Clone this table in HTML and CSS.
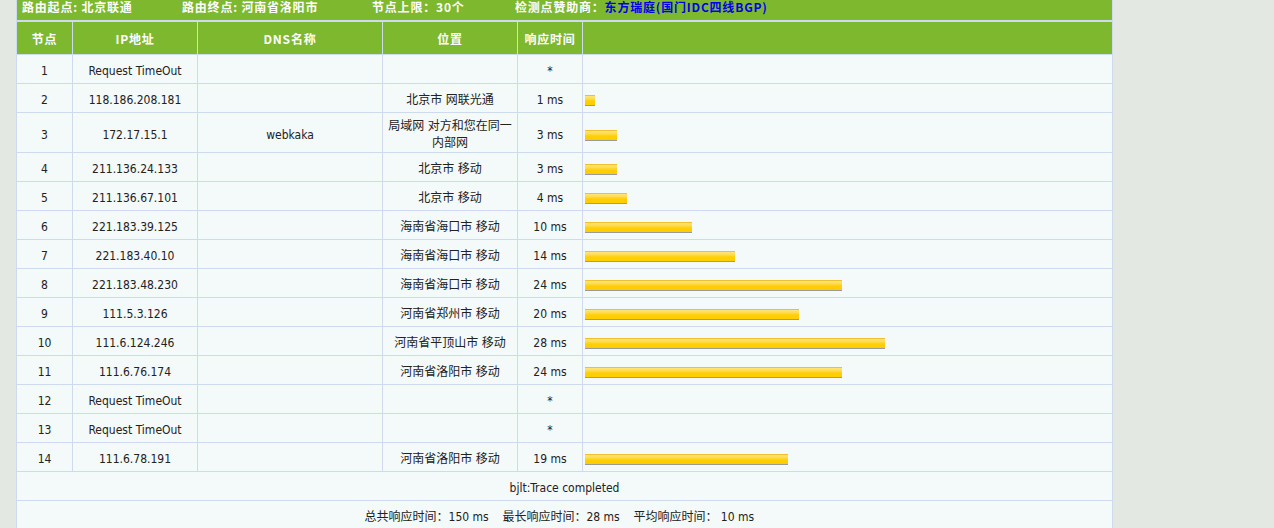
FILE: index.html
```html
<!DOCTYPE html>
<html lang="zh-CN">
<head>
<meta charset="utf-8">
<title>路由追踪</title>
<link rel="stylesheet" href="styles.css">
</head>
<body>
<div class="wrap">
  <div class="topbar">
    <span class="info info-start">路由起点: 北京联通</span>
    <span class="info info-end">路由终点: 河南省洛阳市</span>
    <span class="info info-limit">节点上限：30个</span>
    <span class="info">检测点赞助商：<a class="sponsor">东方瑞庭</a><span class="sponsor">(</span><a class="sponsor">国门IDC四线BGP</a><span class="sponsor">)</span></span>
  </div>
  <table class="trace">
    <colgroup>
      <col class="c-no"><col class="c-ip"><col class="c-dns"><col class="c-loc"><col class="c-time"><col class="c-bar">
    </colgroup>
    <thead>
      <tr><th>节点</th><th>IP地址</th><th>DNS名称</th><th>位置</th><th>响应时间</th><th></th></tr>
    </thead>
    <tbody>
      <tr><td>1</td><td>Request TimeOut</td><td></td><td></td><td>*</td><td></td></tr>
      <tr><td>2</td><td>118.186.208.181</td><td></td><td>北京市 网联光通</td><td>1 ms</td><td class="bar-cell"><span class="bar" style="width:10px"></span></td></tr>
      <tr><td>3</td><td>172.17.15.1</td><td>webkaka</td><td class="tall">局域网 对方和您在同一内部网</td><td>3 ms</td><td class="bar-cell"><span class="bar" style="width:32px"></span></td></tr>
      <tr><td>4</td><td>211.136.24.133</td><td></td><td>北京市 移动</td><td>3 ms</td><td class="bar-cell"><span class="bar" style="width:32px"></span></td></tr>
      <tr><td>5</td><td>211.136.67.101</td><td></td><td>北京市 移动</td><td>4 ms</td><td class="bar-cell"><span class="bar" style="width:42px"></span></td></tr>
      <tr><td>6</td><td>221.183.39.125</td><td></td><td>海南省海口市 移动</td><td>10 ms</td><td class="bar-cell"><span class="bar" style="width:107px"></span></td></tr>
      <tr><td>7</td><td>221.183.40.10</td><td></td><td>海南省海口市 移动</td><td>14 ms</td><td class="bar-cell"><span class="bar" style="width:150px"></span></td></tr>
      <tr><td>8</td><td>221.183.48.230</td><td></td><td>海南省海口市 移动</td><td>24 ms</td><td class="bar-cell"><span class="bar" style="width:257px"></span></td></tr>
      <tr><td>9</td><td>111.5.3.126</td><td></td><td>河南省郑州市 移动</td><td>20 ms</td><td class="bar-cell"><span class="bar" style="width:214px"></span></td></tr>
      <tr><td>10</td><td>111.6.124.246</td><td></td><td>河南省平顶山市 移动</td><td>28 ms</td><td class="bar-cell"><span class="bar" style="width:300px"></span></td></tr>
      <tr><td>11</td><td>111.6.76.174</td><td></td><td>河南省洛阳市 移动</td><td>24 ms</td><td class="bar-cell"><span class="bar" style="width:257px"></span></td></tr>
      <tr><td>12</td><td>Request TimeOut</td><td></td><td></td><td>*</td><td></td></tr>
      <tr><td>13</td><td>Request TimeOut</td><td></td><td></td><td>*</td><td></td></tr>
      <tr><td>14</td><td>111.6.78.191</td><td></td><td>河南省洛阳市 移动</td><td>19 ms</td><td class="bar-cell"><span class="bar" style="width:203px"></span></td></tr>
      <tr><td colspan="6">bjlt:Trace completed</td></tr>
      <tr><td colspan="6" class="summary">总共响应时间：150 ms&nbsp;&nbsp;&nbsp;&nbsp;最长响应时间：28 ms&nbsp;&nbsp;&nbsp;&nbsp;平均响应时间：&nbsp;10 ms&nbsp;&nbsp;&nbsp;</td></tr>
    </tbody>
  </table>
</div>
</body>
</html>
```

FILE: styles.css
```css
html, body {
  margin: 0;
  padding: 0;
  background: #e3e8e2;
}

body {
  font-family: "DejaVu Sans Condensed", "DejaVu Sans", "Noto Sans CJK SC", sans-serif;
  font-stretch: condensed;
  font-size: 12px;
  color: #222;
}

.wrap {
  margin-left: 16px;
  width: 1097px;
}

.topbar {
  box-sizing: border-box;
  height: 21px;
  background: #7db82e;
  border: 1px solid #cddbee;
  border-top: none;
  display: flex;
  align-items: flex-start;
  padding-left: 5px;
  font-family: "Noto Sans CJK SC", sans-serif;
  font-weight: bold;
  font-size: 12px;
  line-height: 14px;
  letter-spacing: 0.8px;
  color: #fff;
  white-space: nowrap;
}

.info {
  display: inline-block;
}

.info-start { width: 160px; }
.info-end { width: 190px; }
.info-limit { width: 143px; }

.sponsor {
  color: #0000ee;
}

.trace {
  width: 1097px;
  table-layout: fixed;
  border-collapse: separate;
  border-spacing: 1px;
  background: #cddbee;
}

.c-no { width: 55px; }
.c-ip { width: 124px; }
.c-dns { width: 184px; }
.c-loc { width: 134px; }
.c-time { width: 64px; }
.c-bar { width: 529px; }

.trace th {
  height: 32px;
  padding: 0;
  background: #7db82e;
  color: #fff;
  font-family: "Noto Sans CJK SC", sans-serif;
  font-weight: bold;
  font-size: 12px;
  letter-spacing: 0.8px;
  text-align: center;
  vertical-align: middle;
}

.trace tbody tr {
  height: 28px;
}

.trace td {
  background: #f4f9f9;
  padding: 5px 2px 0;
  text-align: center;
  vertical-align: middle;
  line-height: 17px;
  font-size: 12px;
}

.trace td.bar-cell {
  text-align: left;
  padding-left: 2px;
}

.bar {
  display: block;
  box-sizing: border-box;
  height: 11px;
  border-top: 1px solid #f0c030;
  border-bottom: 1px solid #9a9a9a;
  background: linear-gradient(to bottom, #ffe47a 0%, #ffdc50 30%, #ffcf05 55%, #ffcc00 100%);
}

.summary {
  letter-spacing: 0;
}
```
